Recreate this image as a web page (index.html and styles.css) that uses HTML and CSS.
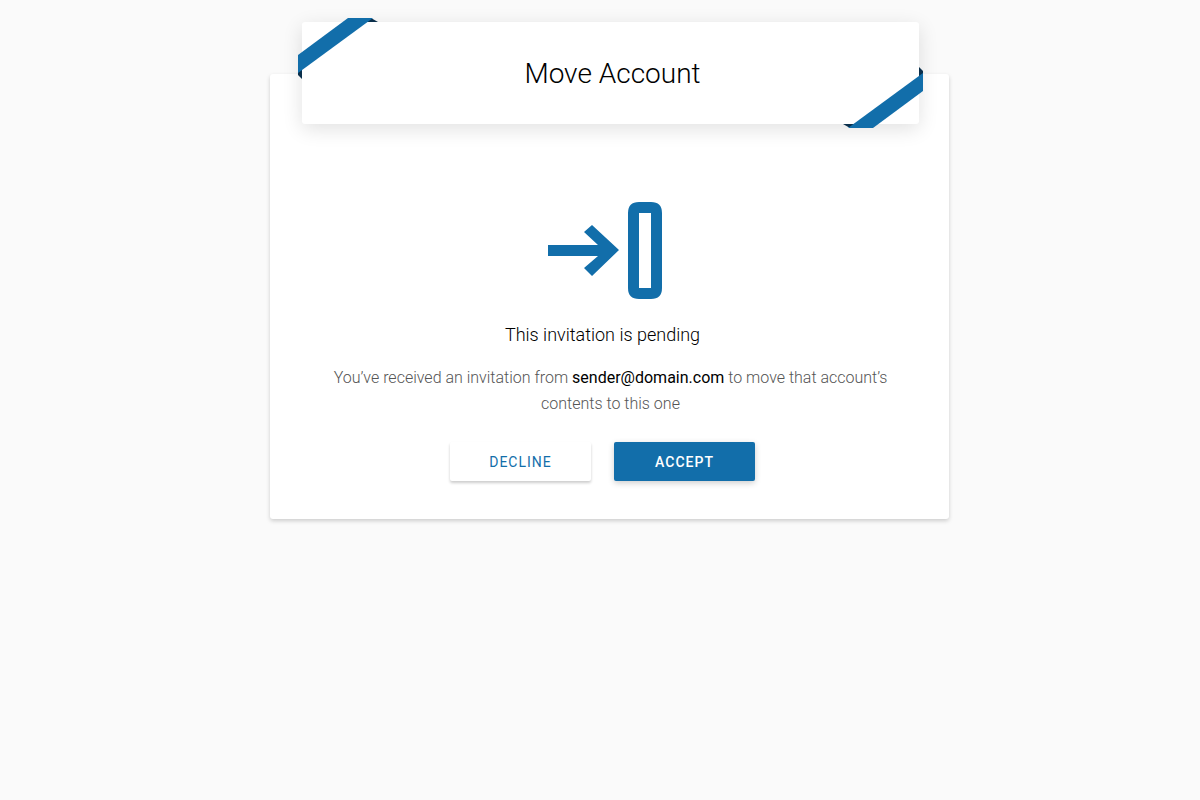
FILE: index.html
```html
<!DOCTYPE html>
<html lang="en">
<head>
<meta charset="UTF-8">
<meta name="viewport" content="width=device-width, initial-scale=1">
<title>Move Account</title>
<link rel="stylesheet" href="styles.css">
</head>
<body>
<main class="card">
    <header class="card-header">
        <svg class="ribbon ribbon-top" viewBox="0 0 80 62" aria-hidden="true">
            <path class="ribbon-fold" d="M73 0L80 4H68ZM0 53V57L4 61V50Z"/>
            <path class="ribbon-band" d="M50 0H75L0 55V37Z"/>
        </svg>
        <h1>Move Account</h1>
        <svg class="ribbon ribbon-bottom" viewBox="0 0 80 62" aria-hidden="true">
            <path class="ribbon-fold" d="M73 0L80 4H68ZM0 53V57L4 61V50Z"/>
            <path class="ribbon-band" d="M50 0H75L0 55V37Z"/>
        </svg>
    </header>

    <section class="card-body">
        <div class="status">
            <svg class="status-icon" viewBox="0 0 118 97" aria-hidden="true">
                <path d="M4 43H54L40 30L48 23L75 48L48 74L40 66L54 54H4Z"/>
                <path fill-rule="evenodd" d="M95 0H107Q118 0 118 11V86Q118 97 107 97H95Q84 97 84 86V11Q84 0 95 0ZM95 11V86H107V11Z"/>
            </svg>
            <h2>This invitation is pending</h2>
        </div>

        <p class="message">You’ve received an invitation from <strong>sender@domain.com</strong> to move that account’s contents to this one</p>

        <div class="actions">
            <button type="button" class="btn">Decline</button>
            <button type="button" class="btn btn-primary">Accept</button>
        </div>
    </section>
</main>
</body>
</html>
```

FILE: styles.css
```css
:root {
    --blue: #126eaa;
    --blue-dark: #0a2f4b;
}

* {
    box-sizing: border-box;
}

body {
    margin: 0;
    padding: 74px 0 32px 19px;
    background: #fafafa;
    color: #000;
    font-family: Roboto, "Liberation Sans", sans-serif;
}

h1,
h2,
p {
    margin: 0;
}

.card {
    display: flow-root;
    max-width: 679px;
    margin: 0 auto;
    padding: 0 30px 38px 32px;
    background: #fff;
    border-radius: 3px;
    box-shadow: 0 2px 4px rgba(0,0,0,0.18);
}

.card-header {
    position: relative;
    margin-top: -52px;
    padding: 33px 0 31px 4px;
    background: #fff;
    border-radius: 3px;
    box-shadow: 0 5px 20px rgba(0,0,0,0.12);
    text-align: center;
}

h1 {
    font-size: 28px;
    font-weight: 300;
    line-height: 38px;
}

.ribbon {
    position: absolute;
    width: 80px;
    height: 62px;
}

.ribbon-top {
    top: -4px;
    left: -4px;
}

.ribbon-bottom {
    right: -4px;
    bottom: -4px;
    transform: rotate(180deg);
}

.ribbon-band {
    fill: var(--blue);
}

.ribbon-fold {
    fill: var(--blue-dark);
}

.card-body {
    padding-top: 78px;
    text-align: center;
}

.status,
.actions {
    padding-right: 16px;
}

.status-icon {
    display: block;
    width: 118px;
    height: 97px;
    margin: 0 auto 24px;
    fill: var(--blue);
}

h2 {
    font-size: 18px;
    font-weight: 300;
    line-height: 24px;
}

.message {
    padding: 0 24px;
    margin: 18px 0 25px;
    color: #555;
    font-size: 16px;
    font-weight: 300;
    line-height: 26px;
}

.message strong {
    color: #000;
    font-weight: 400;
}

.actions {
    display: flex;
    flex-wrap: wrap;
    justify-content: center;
    gap: 23px;
}

.btn {
    min-width: 141px;
    padding: 11px 16px 9px;
    border: 0;
    border-radius: 2px;
    background: #fff;
    color: var(--blue);
    box-shadow: 0 2px 3px rgba(0,0,0,0.2);
    font-family: inherit;
    font-size: 14px;
    font-weight: 400;
    line-height: 19px;
    letter-spacing: 1px;
    text-transform: uppercase;
    cursor: pointer;
}

.btn-primary {
    background: var(--blue);
    color: #fff;
    box-shadow: 0 2px 6px rgba(0,0,0,0.2);
    font-weight: 500;
}
```
